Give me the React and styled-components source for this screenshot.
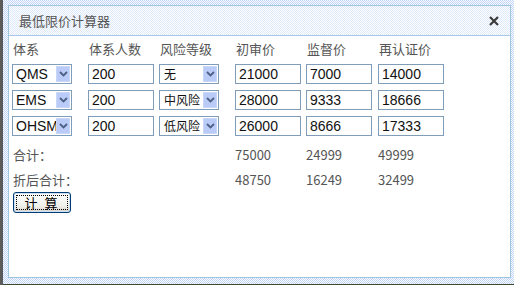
import React, { useState } from 'react';
import styled, { createGlobalStyle } from 'styled-components';

const GlobalStyle = createGlobalStyle`
  html, body {
    margin: 0;
    padding: 0;
    background: #3f4a30;
  }
  body {
    font-family: "Noto Sans CJK SC", "Noto Sans", sans-serif;
  }
`;

const dither = `repeating-conic-gradient(#bcd2f6 0 25%, #ffffff 0 50%) 0 0 / 2px 2px`;

const rows = [
  { system: 'QMS', people: '200', risk: '无', first: '21000', audit: '7000', renew: '14000' },
  { system: 'EMS', people: '200', risk: '中风险', first: '28000', audit: '9333', renew: '18666' },
  { system: 'OHSMS', people: '200', risk: '低风险', first: '26000', audit: '8666', renew: '17333' },
];

const Page = () => {
  const [data] = useState(rows);

  return (
    <>
      <GlobalStyle />
      <Stage>
        <Dialog>
          <Inner>
            <TitleBar>
              <Title>最低限价计算器</Title>
              <Close>
                <svg width='10' height='10' viewBox='0 0 10 10'>
                  <path d='M1 1 L9 9 M9 1 L1 9' stroke='#3a3a3a' strokeWidth='2.2' />
                </svg>
              </Close>
            </TitleBar>
            <Content>
              <Grid>
                <Head>体系</Head>
                <Head>体系人数</Head>
                <Head>风险等级</Head>
                <Head>初审价</Head>
                <Head>监督价</Head>
                <Head>再认证价</Head>

                {data.map((row) => (
                  <React.Fragment key={row.system}>
                    <Select>
                      <SelectText>{row.system}</SelectText>
                      <Arrow />
                    </Select>
                    <Input>{row.people}</Input>
                    <Select>
                      <SelectText cjk>{row.risk}</SelectText>
                      <Arrow />
                    </Select>
                    <Input>{row.first}</Input>
                    <Input>{row.audit}</Input>
                    <Input>{row.renew}</Input>
                  </React.Fragment>
                ))}
              </Grid>

              <Totals>
                <Label>合计：</Label>
                <Num>75000</Num>
                <Num>24999</Num>
                <Num>49999</Num>
                <Label>折后合计：</Label>
                <Num>48750</Num>
                <Num>16249</Num>
                <Num>32499</Num>
              </Totals>

              <Button>
                <Focus>计 算</Focus>
              </Button>
            </Content>
          </Inner>
        </Dialog>
      </Stage>
    </>
  );
};

const Arrow = () => (
  <ArrowBox>
    <svg width='9' height='6' viewBox='0 0 9 6'>
      <path d='M1 1 L4.5 4.5 L8 1' fill='none' stroke='#4d6185' strokeWidth='1.8' />
    </svg>
  </ArrowBox>
);

const Stage = styled.div`
  width: 514px;
  height: 285px;
  padding-bottom: 1px;
  box-sizing: border-box;
  border-left: 3px solid #5b5b5b;
`;

const Dialog = styled.div`
  width: 511px;
  height: 284px;
  box-sizing: border-box;
  padding: 5px 3px 6px 5px;
  background: ${dither};
`;

const Inner = styled.div`
  height: 100%;
  box-sizing: border-box;
  border: 1px solid #9fc6de;
  display: flex;
  flex-direction: column;
  background: #fff;
`;

const TitleBar = styled.div`
  height: 29px;
  display: flex;
  align-items: center;
  justify-content: space-between;
  padding: 0 11px 0 10px;
  border-bottom: 1px solid #a8c6ea;
  background: repeating-conic-gradient(#dde8fb 0 25%, #ffffff 0 50%) 0 0 / 2px 2px;
`;

const Title = styled.span`
  font-size: 13px;
  color: #555;
`;

const Close = styled.span`
  display: flex;
  align-items: center;
`;

const Content = styled.div`
  flex: 1;
  padding: 4px 0 0 3px;
  display: flex;
  flex-direction: column;
`;

const Grid = styled.div`
  display: grid;
  grid-template-columns: 76px 71px 76px 71px 72px 66px;
  grid-template-rows: 18px;
  grid-auto-rows: 20px;
  row-gap: 6px;
  align-items: center;
`;

const Head = styled.div`
  font-size: 13px;
  color: #555;
  line-height: 18px;
  padding-left: 1px;
`;

const Select = styled.div`
  width: 60px;
  height: 20px;
  box-sizing: border-box;
  border: 1px solid #7f9db9;
  display: flex;
  align-items: center;
  padding: 1px;
  background: #fff;
`;

const SelectText = styled.span`
  flex: 1;
  min-width: 0;
  overflow: hidden;
  white-space: nowrap;
  padding-left: ${(props) => (props.cjk ? '3px' : '2px')};
  font-family: ${(props) =>
    props.cjk ? '"Noto Sans CJK SC", sans-serif' : '"Liberation Sans", Arial, sans-serif'};
  font-size: ${(props) => (props.cjk ? '12px' : '14px')};
  color: #111;
  line-height: 16px;
  height: 16px;
`;

const ArrowBox = styled.span`
  width: 14px;
  height: 16px;
  flex: none;
  display: flex;
  align-items: center;
  justify-content: center;
  background: #b9cbf6;
  border: 1px solid #c8d6f8;
  box-sizing: border-box;
`;

const Input = styled.div`
  width: 66px;
  height: 20px;
  box-sizing: border-box;
  border: 1px solid #7f9db9;
  padding: 1px 3px;
  font-family: "Liberation Sans", Arial, sans-serif;
  font-size: 14px;
  line-height: 16px;
  color: #111;
`;

const Totals = styled.div`
  display: grid;
  grid-template-columns: 223px 71px 72px 72px;
  grid-auto-rows: 20px;
  row-gap: 5px;
  margin-top: 8px;
  align-items: center;
`;

const Label = styled.div`
  font-size: 13px;
  color: #555;
  padding-left: 1px;
`;

const Num = styled.div`
  font-size: 13px;
  color: #555;
`;

const Button = styled.button`
  margin: 3px 0 0 1px;
  width: 58px;
  height: 21px;
  padding: 2px;
  border: 1px solid #003c74;
  border-radius: 3px;
  background: linear-gradient(#ffffff, #f0f0ea 70%, #d6d0c5);
  box-shadow: inset 0 0 0 1px #cde0f8;
  display: flex;
  cursor: pointer;
`;

const Focus = styled.span`
  flex: 1;
  border: 1px dotted #000;
  font-family: "Noto Sans CJK SC", sans-serif;
  font-size: 13px;
  line-height: 13px;
  letter-spacing: 2px;
  color: #000;
  display: flex;
  align-items: center;
  justify-content: center;
`;

export default Page;
